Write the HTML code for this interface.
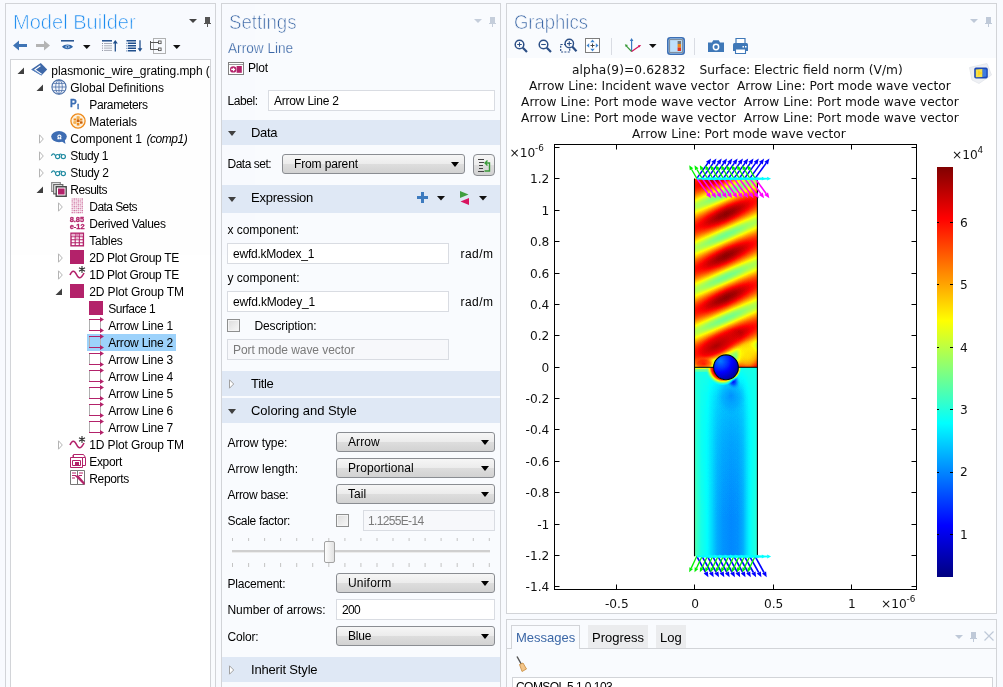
<!DOCTYPE html><html><head><meta charset="utf-8"><title>COMSOL</title><style>
*{box-sizing:border-box;margin:0;padding:0}
html,body{width:1003px;height:687px;overflow:hidden}
body{background:#f8fafe;font-family:"Liberation Sans",sans-serif;font-size:12px;color:#000;position:relative}
.abs{position:absolute}
.panel{position:absolute;border:1px solid #d2d4d8;background:#f9fbfe}
.t{position:absolute;white-space:pre;line-height:16px;height:16px}
.title{position:absolute;white-space:pre;font-size:21px;line-height:24px;transform-origin:0 0;color:#3b67a6;-webkit-text-stroke:.7px #f9fbfe}
.hdr{position:absolute;left:222px;width:278px;background:#dfe8f5}
.hdr span{position:absolute;left:29px;font-size:13px;white-space:pre}
.inp{position:absolute;border:1px solid #d9dce2;background:#fff;padding-left:4px;white-space:pre}
.inp.dis{background:#f7f8fb;color:#7a7a7a}
.combo{position:absolute;border:1px solid #8a8d92;border-radius:3px;background:linear-gradient(#f6f6f6 0%,#ececec 48%,#dddddd 52%,#d2d2d2 100%);white-space:pre}
.combo i{position:absolute;right:5px;top:7px;width:0;height:0;border-left:4px solid transparent;border-right:4px solid transparent;border-top:5px solid #000}
.cb{position:absolute;width:13px;height:13px;border:1px solid #8e8f8f;background:linear-gradient(135deg,#dcdcdc,#f8f8f8);box-shadow:inset 0 0 0 1px #f4f4f4}
.dj{font-family:"DejaVu Sans",sans-serif;font-size:12.2px;color:#111}
svg{position:absolute;overflow:visible}
</style></head><body><div id="root" style="position:absolute;left:0;top:0;width:1003px;height:687px;will-change:transform;opacity:.9999">
<div class="panel" style="left:5px;top:3px;width:211px;height:700px"></div>
<div class="panel" style="left:221px;top:3px;width:280px;height:700px"></div>
<div class="panel" style="left:506px;top:3px;width:491px;height:611px"></div>
<div class="panel" style="left:506px;top:619px;width:491px;height:80px"></div>
<div class="title" style="left:13px;top:10px;color:#1e8cf0;transform:scaleX(.955)">Model Builder</div>
<div class="abs" style="left:10px;top:59px;width:201px;height:640px;border:1px solid #d2d4d8;background:#fff"></div>
<svg style="left:31px;top:62px" width="16" height="16" viewBox="0 0 16 16"><path d="M9.8 1L16.2 7.6L10.4 13.6L0.2 7.6Z" fill="#3e68a8"/><path d="M0.2 7.6L10.4 13.6L10.6 12L4 7.6Z" fill="#5b84c0"/><path d="M9.4 3.8L4 7.6L10.6 12.1" stroke="#fff" stroke-width="1.1" fill="none"/></svg>
<div class="t" style="left:51.3px;top:63px;line-height:17px;height:17px;letter-spacing:-0.056px;">plasmonic_wire_grating.mph (</div>
<svg style="left:17px;top:67px" width="8" height="8" viewBox="0 0 8 8"><path d="M7 0.5V7H0.5Z" fill="#404040"/></svg>
<svg style="left:51px;top:79px" width="16" height="16" viewBox="0 0 16 16"><circle cx="8" cy="8" r="7.1" fill="#f3f6fc" stroke="#4a6fa8" stroke-width="1.1"/><ellipse cx="8" cy="8" rx="3.3" ry="7" fill="none" stroke="#4a6fa8" stroke-width="0.8"/><path d="M8 1V15M1 8H15M2.2 4.4H13.8M2.2 11.6H13.8" stroke="#4a6fa8" stroke-width="0.8"/></svg>
<div class="t" style="left:70.3px;top:80px;line-height:17px;height:17px;letter-spacing:-0.025px;">Global Definitions</div>
<svg style="left:36px;top:84px" width="8" height="8" viewBox="0 0 8 8"><path d="M7 0.5V7H0.5Z" fill="#404040"/></svg>
<svg style="left:70px;top:96px" width="16" height="16" viewBox="0 0 16 16"><text x="0" y="10.8" font-size="10" fill="#3a6db5" stroke="#3a6db5" stroke-width=".3" style="font-family:Liberation Sans,sans-serif;font-weight:bold">P</text><text x="7" y="12.8" font-size="8" fill="#3a6db5" stroke="#3a6db5" stroke-width=".3" style="font-family:Liberation Sans,sans-serif;font-weight:bold">i</text></svg>
<div class="t" style="left:89.3px;top:97px;line-height:17px;height:17px;letter-spacing:-0.372px;">Parameters</div>
<svg style="left:70px;top:113px" width="16" height="16" viewBox="0 0 16 16"><circle cx="8" cy="8" r="7.1" fill="#fdf0dc" stroke="#ee8a1a" stroke-width="1.3"/><path d="M3.6 5.4H6.2V7.6H3.6ZM6.8 3.6H9.4V5.8H6.8ZM10 5.4H12.4V7.6H10ZM6.8 6.6H9.4V9H6.8ZM3.6 8.4H6.2V10.6H3.6ZM10 8.4H12.4V10.6H10ZM6.8 9.8H9.4V12.4H6.8Z" fill="#ee8a1a"/><path d="M6.8 6.6H9.4V9H6.8ZM10 8.4H12.4V10.6H10Z" fill="#c8600e"/><path d="M6.8 3.6H9.4V5.8H6.8ZM3.6 8.4H6.2V10.6H3.6Z" fill="#f6b04a"/></svg>
<div class="t" style="left:89.3px;top:114px;line-height:17px;height:17px;letter-spacing:-0.120px;">Materials</div>
<svg style="left:51px;top:130px" width="16" height="16" viewBox="0 0 16 16"><ellipse cx="8" cy="6.6" rx="7.8" ry="5.6" fill="#3e6db3"/><path d="M9.5 10.5L14.5 14L13.5 8.5Z" fill="#3e6db3"/><path d="M6.4 8.6H7.7V7.8C6.5 7.2 6.4 5.2 8.4 5C10.4 5.2 10.3 7.2 9.1 7.8V8.6H10.4" stroke="#fff" stroke-width="1.1" fill="none"/></svg>
<div class="t" style="left:70.3px;top:131px;line-height:17px;height:17px;"><span style="letter-spacing:-0.040px;">Component 1</span><i style="margin-left:4.5px;letter-spacing:-0.458px;">(comp1)</i></div>
<svg style="left:39px;top:134px" width="6" height="10" viewBox="0 0 6 10"><path d="M0.5 0.8L4.3 5L0.5 9.2Z" fill="#fff" stroke="#b4b4b4"/></svg>
<svg style="left:51px;top:147px" width="16" height="16" viewBox="0 0 16 16"><path d="M0.3 8.8C1.6 6.2 3.2 6.4 4.4 8.6" stroke="#1f8aa0" stroke-width="1.2" fill="none"/><circle cx="6.6" cy="9.6" r="2.1" stroke="#1f8aa0" stroke-width="1.2" fill="none"/><circle cx="12.3" cy="9.6" r="2.1" stroke="#1f8aa0" stroke-width="1.2" fill="none"/><path d="M8.2 8C9 6.6 10 6.6 10.8 8" stroke="#1f8aa0" stroke-width="1.1" fill="none"/></svg>
<div class="t" style="left:70.3px;top:148px;line-height:17px;height:17px;letter-spacing:-0.413px;">Study 1</div>
<svg style="left:39px;top:151px" width="6" height="10" viewBox="0 0 6 10"><path d="M0.5 0.8L4.3 5L0.5 9.2Z" fill="#fff" stroke="#b4b4b4"/></svg>
<svg style="left:51px;top:164px" width="16" height="16" viewBox="0 0 16 16"><path d="M0.3 8.8C1.6 6.2 3.2 6.4 4.4 8.6" stroke="#1f8aa0" stroke-width="1.2" fill="none"/><circle cx="6.6" cy="9.6" r="2.1" stroke="#1f8aa0" stroke-width="1.2" fill="none"/><circle cx="12.3" cy="9.6" r="2.1" stroke="#1f8aa0" stroke-width="1.2" fill="none"/><path d="M8.2 8C9 6.6 10 6.6 10.8 8" stroke="#1f8aa0" stroke-width="1.1" fill="none"/></svg>
<div class="t" style="left:70.3px;top:165px;line-height:17px;height:17px;letter-spacing:-0.356px;">Study 2</div>
<svg style="left:39px;top:168px" width="6" height="10" viewBox="0 0 6 10"><path d="M0.5 0.8L4.3 5L0.5 9.2Z" fill="#fff" stroke="#b4b4b4"/></svg>
<svg style="left:51px;top:181px" width="16" height="16" viewBox="0 0 16 16"><path d="M0.7 1.7H9.3V10.3H0.7Z" fill="#fff" stroke="#8a8a8a" stroke-width="1.2"/><path d="M2.7 3.7H11.8V12.8H2.7Z" fill="#fff" stroke="#6a6a6a" stroke-width="1.2"/><path d="M5.2 5.8H15.2V15.2H5.2Z" fill="#fff" stroke="#4a4a4a" stroke-width="1.4"/><rect x="7" y="7.5" width="6.6" height="6" fill="#b3226a"/></svg>
<div class="t" style="left:70.3px;top:182px;line-height:17px;height:17px;letter-spacing:-0.488px;">Results</div>
<svg style="left:36px;top:186px" width="8" height="8" viewBox="0 0 8 8"><path d="M7 0.5V7H0.5Z" fill="#404040"/></svg>
<svg style="left:70px;top:198px" width="16" height="16" viewBox="0 0 16 16"><rect x="1.6" y="0.40" width="1.2" height="1.2" fill="#b3226a" opacity="0.50"/><rect x="1.6" y="2.35" width="1.2" height="1.2" fill="#b3226a" opacity="0.74"/><rect x="1.6" y="4.30" width="1.2" height="1.2" fill="#b3226a" opacity="0.50"/><rect x="1.6" y="6.25" width="1.2" height="1.2" fill="#b3226a" opacity="0.74"/><rect x="1.6" y="8.20" width="1.2" height="1.2" fill="#b3226a" opacity="0.50"/><rect x="1.6" y="10.15" width="1.2" height="1.2" fill="#b3226a" opacity="0.74"/><rect x="1.6" y="12.10" width="1.2" height="1.2" fill="#b3226a" opacity="0.50"/><rect x="1.6" y="14.05" width="1.2" height="1.2" fill="#b3226a" opacity="0.74"/><rect x="3.6" y="0.40" width="1.2" height="1.2" fill="#b3226a" opacity="0.86"/><rect x="3.6" y="2.35" width="1.2" height="1.2" fill="#b3226a" opacity="0.62"/><rect x="3.6" y="4.30" width="1.2" height="1.2" fill="#b3226a" opacity="0.86"/><rect x="3.6" y="6.25" width="1.2" height="1.2" fill="#b3226a" opacity="0.62"/><rect x="3.6" y="8.20" width="1.2" height="1.2" fill="#b3226a" opacity="0.86"/><rect x="3.6" y="10.15" width="1.2" height="1.2" fill="#b3226a" opacity="0.62"/><rect x="3.6" y="12.10" width="1.2" height="1.2" fill="#b3226a" opacity="0.86"/><rect x="3.6" y="14.05" width="1.2" height="1.2" fill="#b3226a" opacity="0.62"/><rect x="5.6" y="0.40" width="1.2" height="1.2" fill="#b3226a" opacity="0.74"/><rect x="5.6" y="2.35" width="1.2" height="1.2" fill="#b3226a" opacity="0.50"/><rect x="5.6" y="4.30" width="1.2" height="1.2" fill="#b3226a" opacity="0.74"/><rect x="5.6" y="6.25" width="1.2" height="1.2" fill="#b3226a" opacity="0.50"/><rect x="5.6" y="8.20" width="1.2" height="1.2" fill="#b3226a" opacity="0.74"/><rect x="5.6" y="10.15" width="1.2" height="1.2" fill="#b3226a" opacity="0.50"/><rect x="5.6" y="12.10" width="1.2" height="1.2" fill="#b3226a" opacity="0.74"/><rect x="5.6" y="14.05" width="1.2" height="1.2" fill="#b3226a" opacity="0.50"/><rect x="7.6" y="0.40" width="1.2" height="1.2" fill="#b3226a" opacity="0.62"/><rect x="7.6" y="2.35" width="1.2" height="1.2" fill="#b3226a" opacity="0.86"/><rect x="7.6" y="4.30" width="1.2" height="1.2" fill="#b3226a" opacity="0.62"/><rect x="7.6" y="6.25" width="1.2" height="1.2" fill="#b3226a" opacity="0.86"/><rect x="7.6" y="8.20" width="1.2" height="1.2" fill="#b3226a" opacity="0.62"/><rect x="7.6" y="10.15" width="1.2" height="1.2" fill="#b3226a" opacity="0.86"/><rect x="7.6" y="12.10" width="1.2" height="1.2" fill="#b3226a" opacity="0.62"/><rect x="7.6" y="14.05" width="1.2" height="1.2" fill="#b3226a" opacity="0.86"/><rect x="9.6" y="0.40" width="1.2" height="1.2" fill="#b3226a" opacity="0.50"/><rect x="9.6" y="2.35" width="1.2" height="1.2" fill="#b3226a" opacity="0.74"/><rect x="9.6" y="4.30" width="1.2" height="1.2" fill="#b3226a" opacity="0.50"/><rect x="9.6" y="6.25" width="1.2" height="1.2" fill="#b3226a" opacity="0.74"/><rect x="9.6" y="8.20" width="1.2" height="1.2" fill="#b3226a" opacity="0.50"/><rect x="9.6" y="10.15" width="1.2" height="1.2" fill="#b3226a" opacity="0.74"/><rect x="9.6" y="12.10" width="1.2" height="1.2" fill="#b3226a" opacity="0.50"/><rect x="9.6" y="14.05" width="1.2" height="1.2" fill="#b3226a" opacity="0.74"/><rect x="11.6" y="0.40" width="1.2" height="1.2" fill="#b3226a" opacity="0.86"/><rect x="11.6" y="2.35" width="1.2" height="1.2" fill="#b3226a" opacity="0.62"/><rect x="11.6" y="4.30" width="1.2" height="1.2" fill="#b3226a" opacity="0.86"/><rect x="11.6" y="6.25" width="1.2" height="1.2" fill="#b3226a" opacity="0.62"/><rect x="11.6" y="8.20" width="1.2" height="1.2" fill="#b3226a" opacity="0.86"/><rect x="11.6" y="10.15" width="1.2" height="1.2" fill="#b3226a" opacity="0.62"/><rect x="11.6" y="12.10" width="1.2" height="1.2" fill="#b3226a" opacity="0.86"/><rect x="11.6" y="14.05" width="1.2" height="1.2" fill="#b3226a" opacity="0.62"/></svg>
<div class="t" style="left:89.3px;top:199px;line-height:17px;height:17px;letter-spacing:-0.566px;">Data Sets</div>
<svg style="left:58px;top:202px" width="6" height="10" viewBox="0 0 6 10"><path d="M0.5 0.8L4.3 5L0.5 9.2Z" fill="#fff" stroke="#b4b4b4"/></svg>
<svg style="left:70px;top:215px" width="16" height="16" viewBox="0 0 16 16"><g font-size="7.4" fill="#b3226a" stroke="#b3226a" stroke-width=".3" style="font-family:Liberation Sans,sans-serif;font-weight:bold"><text x="-0.3" y="7">8.85</text><text x="-0.3" y="14">e-12</text></g></svg>
<div class="t" style="left:89.3px;top:216px;line-height:17px;height:17px;letter-spacing:-0.291px;">Derived Values</div>
<svg style="left:70px;top:232px" width="16" height="16" viewBox="0 0 16 16"><rect x="1" y="1.2" width="12.4" height="12.6" fill="#fff" stroke="#b3226a" stroke-width="1.4"/><path d="M1 4.8H13.4M1 7.8H13.4M1 10.8H13.4M5.2 1.5V13.8M9.3 1.5V13.8" stroke="#b3226a" stroke-width="1.1"/><rect x="1.7" y="1.9" width="3" height="2.3" fill="#e9b3cf"/><rect x="5.8" y="1.9" width="3" height="2.3" fill="#d984b0"/><rect x="9.9" y="1.9" width="2.8" height="2.3" fill="#e9b3cf"/><rect x="5.8" y="5.4" width="3" height="1.9" fill="#e9b3cf"/></svg>
<div class="t" style="left:89.3px;top:233px;line-height:17px;height:17px;letter-spacing:-0.231px;">Tables</div>
<svg style="left:70px;top:249px" width="16" height="16" viewBox="0 0 16 16"><rect x="0" y="1" width="14" height="14" fill="#b3226a"/></svg>
<div class="t" style="left:89.3px;top:250px;line-height:17px;height:17px;letter-spacing:-0.305px;">2D Plot Group TE</div>
<svg style="left:58px;top:253px" width="6" height="10" viewBox="0 0 6 10"><path d="M0.5 0.8L4.3 5L0.5 9.2Z" fill="#fff" stroke="#b4b4b4"/></svg>
<svg style="left:70px;top:266px" width="16" height="16" viewBox="0 0 16 16"><path d="M0 9C2 4 4.5 4 6.5 8.5S11 13 14 7" stroke="#b3226a" stroke-width="1.6" fill="none"/><path d="M12 0V7M9 1.7L15 5.3M15 1.7L9 5.3" stroke="#333" stroke-width="1.1"/></svg>
<div class="t" style="left:89.3px;top:267px;line-height:17px;height:17px;letter-spacing:-0.305px;">1D Plot Group TE</div>
<svg style="left:58px;top:270px" width="6" height="10" viewBox="0 0 6 10"><path d="M0.5 0.8L4.3 5L0.5 9.2Z" fill="#fff" stroke="#b4b4b4"/></svg>
<svg style="left:70px;top:283px" width="16" height="16" viewBox="0 0 16 16"><rect x="0" y="1" width="14" height="14" fill="#b3226a"/></svg>
<div class="t" style="left:89.3px;top:284px;line-height:17px;height:17px;letter-spacing:-0.117px;">2D Plot Group TM</div>
<svg style="left:55px;top:288px" width="8" height="8" viewBox="0 0 8 8"><path d="M7 0.5V7H0.5Z" fill="#404040"/></svg>
<svg style="left:89px;top:300px" width="16" height="16" viewBox="0 0 16 16"><rect x="0" y="1" width="14" height="14" fill="#b3226a"/></svg>
<div class="t" style="left:108.3px;top:301px;line-height:17px;height:17px;letter-spacing:-0.496px;">Surface 1</div>
<svg style="left:89px;top:317px" width="16" height="16" viewBox="0 0 16 16"><path d="M0.5 3V14M11.5 3V14" stroke="#b0b0b0" fill="none"/><path d="M0 2.5H13M0 13.5H13" stroke="#b3226a" stroke-width="1.2" fill="none"/><path d="M11 0L15 2.5L11 5ZM11 11L15 13.5L11 16Z" fill="#b3226a"/></svg>
<div class="t" style="left:108.3px;top:318px;line-height:17px;height:17px;letter-spacing:-0.222px;">Arrow Line 1</div>
<div class="abs" style="left:87px;top:334px;width:89px;height:17px;background:#9dd2fb"></div>
<svg style="left:89px;top:334px" width="16" height="16" viewBox="0 0 16 16"><path d="M0.5 3V14M11.5 3V14" stroke="#b0b0b0" fill="none"/><path d="M0 2.5H13M0 13.5H13" stroke="#b3226a" stroke-width="1.2" fill="none"/><path d="M11 0L15 2.5L11 5ZM11 11L15 13.5L11 16Z" fill="#b3226a"/></svg>
<div class="t" style="left:108.3px;top:335px;line-height:17px;height:17px;letter-spacing:-0.222px;">Arrow Line 2</div>
<svg style="left:89px;top:351px" width="16" height="16" viewBox="0 0 16 16"><path d="M0.5 3V14M11.5 3V14" stroke="#b0b0b0" fill="none"/><path d="M0 2.5H13M0 13.5H13" stroke="#b3226a" stroke-width="1.2" fill="none"/><path d="M11 0L15 2.5L11 5ZM11 11L15 13.5L11 16Z" fill="#b3226a"/></svg>
<div class="t" style="left:108.3px;top:352px;line-height:17px;height:17px;letter-spacing:-0.222px;">Arrow Line 3</div>
<svg style="left:89px;top:368px" width="16" height="16" viewBox="0 0 16 16"><path d="M0.5 3V14M11.5 3V14" stroke="#b0b0b0" fill="none"/><path d="M0 2.5H13M0 13.5H13" stroke="#b3226a" stroke-width="1.2" fill="none"/><path d="M11 0L15 2.5L11 5ZM11 11L15 13.5L11 16Z" fill="#b3226a"/></svg>
<div class="t" style="left:108.3px;top:369px;line-height:17px;height:17px;letter-spacing:-0.222px;">Arrow Line 4</div>
<svg style="left:89px;top:385px" width="16" height="16" viewBox="0 0 16 16"><path d="M0.5 3V14M11.5 3V14" stroke="#b0b0b0" fill="none"/><path d="M0 2.5H13M0 13.5H13" stroke="#b3226a" stroke-width="1.2" fill="none"/><path d="M11 0L15 2.5L11 5ZM11 11L15 13.5L11 16Z" fill="#b3226a"/></svg>
<div class="t" style="left:108.3px;top:386px;line-height:17px;height:17px;letter-spacing:-0.222px;">Arrow Line 5</div>
<svg style="left:89px;top:402px" width="16" height="16" viewBox="0 0 16 16"><path d="M0.5 3V14M11.5 3V14" stroke="#b0b0b0" fill="none"/><path d="M0 2.5H13M0 13.5H13" stroke="#b3226a" stroke-width="1.2" fill="none"/><path d="M11 0L15 2.5L11 5ZM11 11L15 13.5L11 16Z" fill="#b3226a"/></svg>
<div class="t" style="left:108.3px;top:403px;line-height:17px;height:17px;letter-spacing:-0.222px;">Arrow Line 6</div>
<svg style="left:89px;top:419px" width="16" height="16" viewBox="0 0 16 16"><path d="M0.5 3V14M11.5 3V14" stroke="#b0b0b0" fill="none"/><path d="M0 2.5H13M0 13.5H13" stroke="#b3226a" stroke-width="1.2" fill="none"/><path d="M11 0L15 2.5L11 5ZM11 11L15 13.5L11 16Z" fill="#b3226a"/></svg>
<div class="t" style="left:108.3px;top:420px;line-height:17px;height:17px;letter-spacing:-0.222px;">Arrow Line 7</div>
<svg style="left:70px;top:436px" width="16" height="16" viewBox="0 0 16 16"><path d="M0 9C2 4 4.5 4 6.5 8.5S11 13 14 7" stroke="#b3226a" stroke-width="1.6" fill="none"/><path d="M12 0V7M9 1.7L15 5.3M15 1.7L9 5.3" stroke="#333" stroke-width="1.1"/></svg>
<div class="t" style="left:89.3px;top:437px;line-height:17px;height:17px;letter-spacing:-0.117px;">1D Plot Group TM</div>
<svg style="left:58px;top:440px" width="6" height="10" viewBox="0 0 6 10"><path d="M0.5 0.8L4.3 5L0.5 9.2Z" fill="#fff" stroke="#b4b4b4"/></svg>
<svg style="left:70px;top:453px" width="16" height="16" viewBox="0 0 16 16"><path d="M3.5 1.5H13.5L15.5 4.5V12.5H5.5L3.5 9.5Z" fill="#fff" stroke="#b3226a" stroke-width="1"/><path d="M0.5 4.5H12.5V14.5H0.5Z" fill="#fff" stroke="#b3226a" stroke-width="1"/><path d="M3 4.5V2M12.5 4.5L15 4.5M2.5 7.5H10.5V12.5H2.5Z" fill="none" stroke="#b3226a" stroke-width="1"/><rect x="5" y="9" width="4" height="3" fill="#b3226a"/></svg>
<div class="t" style="left:89.3px;top:454px;line-height:17px;height:17px;letter-spacing:-0.347px;">Export</div>
<svg style="left:70px;top:470px" width="16" height="16" viewBox="0 0 16 16"><path d="M0.5 0.5H7.5V14.5H0.5ZM7.5 0.5H14.5V14.5H7.5Z" fill="#fff" stroke="#777"/><path d="M2 3H6M2 5.5H6M2 8H5M9 3H13M9 5.5H12" stroke="#b3226a" stroke-width="1"/><path d="M5 6L14 15L15 13L8 5Z" fill="#b3226a"/></svg>
<div class="t" style="left:89.3px;top:471px;line-height:17px;height:17px;letter-spacing:-0.345px;">Reports</div>
<svg style="left:189px;top:19px" width="8" height="4" viewBox="0 0 8 4"><path d="M0 0H8L4.0 4Z" fill="#444"/></svg>
<svg style="left:204px;top:17px" width="7" height="10" viewBox="0 0 7 10"><path d="M1 0H6V6H7V7H4V10H3V7H0V6H1Z" fill="#555"/></svg>
<svg style="left:13px;top:40px" width="14" height="11" viewBox="0 0 14 11"><path d="M0 5.5L6 0.5V4H14V7H6V10.5Z" fill="#3f74b5"/></svg>
<svg style="left:36px;top:40px" width="14" height="11" viewBox="0 0 14 11"><path d="M14 5.5L8 0.5V4H0V7H8V10.5Z" fill="#b4b4b4"/></svg>
<svg style="left:61px;top:40px" width="14" height="11" viewBox="0 0 14 11"><path d="M0 0.8H13" stroke="#1f4e8c" stroke-width="1.5"/><path d="M1 6.8C3.5 3.6 9.5 3.6 12 6.8C9.5 10 3.5 10 1 6.8Z" fill="#2f65a8"/><ellipse cx="6.5" cy="6.8" rx="2.2" ry="1.5" fill="#9fc3ea"/><circle cx="6.5" cy="6.8" r=".9" fill="#1f4e8c"/></svg>
<svg style="left:83px;top:44.5px" width="7.5" height="4" viewBox="0 0 7.5 4"><path d="M0 0H7.5L3.75 4Z" fill="#111"/></svg>
<svg style="left:102px;top:40px" width="16" height="12" viewBox="0 0 16 12"><path d="M0 0.8H10" stroke="#1f4e8c" stroke-width="1.5"/><path d="M2 3.5H10M2 5.8H10M2 8.1H10M2 10.4H10" stroke="#a9adb8" stroke-width="1"/><path d="M0 3.5H1M0 5.8H1M0 8.1H1M0 10.4H1" stroke="#8a8fa0" stroke-width="1"/><path d="M13.3 11.5V2" stroke="#1f4e8c" stroke-width="1.3" fill="none"/><path d="M13.3 0L15.8 3.6H10.8Z" fill="#1f4e8c"/></svg>
<svg style="left:126px;top:40px" width="16" height="12" viewBox="0 0 16 12"><path d="M0.5 0.8H10M2 3.3H10M2 5.8H10M2 8.3H10M2 10.8H10" stroke="#1f4e8c" stroke-width="1.5"/><path d="M0.5 3.3H1.3M0.5 5.8H1.3M0.5 8.3H1.3M0.5 10.8H1.3" stroke="#1f4e8c" stroke-width="1.2"/><path d="M14 0.3V9.5" stroke="#1f4e8c" stroke-width="1.3" fill="none"/><path d="M14 11.8L16.4 8.2H11.6Z" fill="#1f4e8c"/></svg>
<svg style="left:149px;top:38px" width="18" height="16" viewBox="0 0 18 16"><rect x="4.5" y="0.5" width="12" height="15" fill="none" stroke="#666" stroke-dasharray="1 1"/><path d="M1.5 3V11.5H9.5M1.5 4.5H9.5" stroke="#555" fill="none"/><rect x="9.5" y="3" width="2.6" height="2.6" fill="#fff" stroke="#555" stroke-width=".9"/><rect x="9.5" y="10" width="2.6" height="2.6" fill="#fff" stroke="#555" stroke-width=".9"/></svg>
<svg style="left:172.5px;top:44.5px" width="7.5" height="4" viewBox="0 0 7.5 4"><path d="M0 0H7.5L3.75 4Z" fill="#111"/></svg>
<div class="title" style="left:229px;top:10px;transform:scaleX(.89)">Settings</div>
<svg style="left:474px;top:19px" width="8" height="4" viewBox="0 0 8 4"><path d="M0 0H8L4.0 4Z" fill="#c5cedb"/></svg>
<svg style="left:489px;top:17px" width="7" height="10" viewBox="0 0 7 10"><path d="M1 0H6V6H7V7H4V10H3V7H0V6H1Z" fill="#c5cedb"/></svg>
<div class="title" style="left:228px;top:39px;font-size:14.67px;line-height:18px;transform:scaleX(.93);-webkit-text-stroke:.25px #f9fbfe">Arrow Line</div>
<svg style="left:228px;top:62px" width="16" height="13" viewBox="0 0 16 13"><rect x="0.5" y="0.5" width="15" height="12" fill="#fff" stroke="#808080"/><path d="M1 2.5H15" stroke="#9a9a9a"/><rect x="8.6" y="4" width="5.2" height="6.8" fill="#b3226a"/><circle cx="5.2" cy="7.4" r="3.2" fill="#b3226a"/><path d="M3.2 7.4H5.6" stroke="#fff" stroke-width="1.5"/><path d="M5 5.4L7.4 7.4L5 9.4Z" fill="#fff"/></svg>
<div class="t" style="left:248px;top:60px;letter-spacing:-0.169px;">Plot</div>
<div class="t" style="left:227.5px;top:93px;letter-spacing:-0.415px;">Label:</div>
<div class="inp" style="left:268px;top:90px;width:227px;height:21px;line-height:21px;padding-left:5px"><span style="letter-spacing:-0.213px;">Arrow Line 2</span></div>
<div class="hdr" style="top:120px;height:25px"><span style="top:4.5px;line-height:16px;letter-spacing:-0.340px;">Data</span></div>
<svg style="left:228px;top:130.5px" width="8" height="5" viewBox="0 0 8 5"><path d="M0 0H8L4 5Z" fill="#404040"/></svg>
<div class="t" style="left:227.5px;top:156px;letter-spacing:-0.491px;">Data set:</div>
<div class="combo" style="left:282px;top:154px;width:183px;height:20px;line-height:19px;padding-left:11px;letter-spacing:-0.132px;">From parent<i></i></div>
<div class="combo" style="left:473px;top:154px;width:22px;height:22px;border-radius:4px"></div>
<svg style="left:477px;top:158px" width="14" height="14" viewBox="0 0 14 14"><path d="M1 1.5H7M2 4.5H7M2 7.5H6M2 10.5H6M1 13.5H7" stroke="#444" stroke-width="1"/><path d="M7.5 13H12.5V5H8.5M10.5 2.5L8 5L10.5 7.5" stroke="#3a9a3a" stroke-width="1.4" fill="none"/></svg>
<div class="hdr" style="top:185px;height:28px"><span style="top:5px;line-height:16px;letter-spacing:-0.221px;">Expression</span></div>
<svg style="left:228px;top:197.0px" width="8" height="5" viewBox="0 0 8 5"><path d="M0 0H8L4 5Z" fill="#404040"/></svg>
<svg style="left:417px;top:192px" width="11" height="11" viewBox="0 0 11 11"><path d="M4 0H7V4H11V7H7V11H4V7H0V4H4Z" fill="#3d7bbf"/></svg>
<svg style="left:436.5px;top:196px" width="8" height="4.5" viewBox="0 0 8 4.5"><path d="M0 0H8L4.0 4.5Z" fill="#111"/></svg>
<svg style="left:460px;top:190.5px" width="9" height="14" viewBox="0 0 9 14"><path d="M0 0L8.5 3.5L0 7Z" fill="#3f9f3f"/><path d="M9 7L0.5 10.5L9 14Z" fill="#d8145f"/></svg>
<svg style="left:478.5px;top:196px" width="8" height="4.5" viewBox="0 0 8 4.5"><path d="M0 0H8L4.0 4.5Z" fill="#111"/></svg>
<div class="t" style="left:227.5px;top:222px;letter-spacing:-0.036px;">x component:</div>
<div class="inp" style="left:227px;top:243px;width:222px;height:21px;line-height:21px;padding-left:5px"><span style="letter-spacing:-0.226px;">ewfd.kModex_1</span></div>
<div class="t" style="left:460.5px;top:246px;letter-spacing:0.446px;">rad/m</div>
<div class="t" style="left:227.5px;top:270px;letter-spacing:-0.003px;">y component:</div>
<div class="inp" style="left:227px;top:291px;width:222px;height:21px;line-height:21px;padding-left:5px"><span style="letter-spacing:-0.157px;">ewfd.kModey_1</span></div>
<div class="t" style="left:460.5px;top:294px;letter-spacing:0.446px;">rad/m</div>
<div class="cb" style="left:227px;top:319px"></div>
<div class="t" style="left:254.5px;top:318px;letter-spacing:-0.121px;">Description:</div>
<div class="inp dis" style="left:227px;top:339px;width:222px;height:21px;line-height:21px;padding-left:5px"><span style="letter-spacing:-0.053px;">Port mode wave vector</span></div>
<div class="hdr" style="top:371px;height:25px"><span style="top:4.5px;line-height:16px;letter-spacing:-0.315px;">Title</span></div>
<svg style="left:229px;top:378.5px" width="6" height="10" viewBox="0 0 6 10"><path d="M0.5 0.8L4.7 5L0.5 9.2Z" fill="#fff" stroke="#a0a0a0"/></svg>
<div class="hdr" style="top:398px;height:25px"><span style="top:4.5px;line-height:16px;letter-spacing:-0.029px;">Coloring and Style</span></div>
<svg style="left:228px;top:408.5px" width="8" height="5" viewBox="0 0 8 5"><path d="M0 0H8L4 5Z" fill="#404040"/></svg>
<div class="t" style="left:227.5px;top:435px;letter-spacing:-0.080px;">Arrow type:</div>
<div class="combo" style="left:336px;top:432px;width:159px;height:20px;line-height:19px;padding-left:11px;letter-spacing:0.093px;">Arrow<i></i></div>
<div class="t" style="left:227.5px;top:461px;letter-spacing:-0.015px;">Arrow length:</div>
<div class="combo" style="left:336px;top:458px;width:159px;height:20px;line-height:19px;padding-left:11px;letter-spacing:0.083px;">Proportional<i></i></div>
<div class="t" style="left:227.5px;top:487px;letter-spacing:-0.293px;">Arrow base:</div>
<div class="combo" style="left:336px;top:484px;width:159px;height:20px;line-height:19px;padding-left:11px;letter-spacing:0.074px;">Tail<i></i></div>
<div class="t" style="left:227.5px;top:513px;letter-spacing:-0.315px;">Scale factor:</div>
<div class="cb" style="left:336px;top:514px"></div>
<div class="inp dis" style="left:363px;top:510px;width:132px;height:21px;line-height:21px;padding-left:4px"><span style="letter-spacing:-0.655px;">1.1255E-14</span></div>
<svg style="left:0;top:0" width="1003" height="687"><rect x="232.0" y="538" width="1" height="3" fill="#c4c4c4"/><rect x="232.0" y="563" width="1" height="4" fill="#c4c4c4"/><rect x="248.1" y="538" width="1" height="3" fill="#c4c4c4"/><rect x="248.1" y="563" width="1" height="4" fill="#c4c4c4"/><rect x="264.1" y="538" width="1" height="3" fill="#c4c4c4"/><rect x="264.1" y="563" width="1" height="4" fill="#c4c4c4"/><rect x="280.1" y="538" width="1" height="3" fill="#c4c4c4"/><rect x="280.1" y="563" width="1" height="4" fill="#c4c4c4"/><rect x="296.2" y="538" width="1" height="3" fill="#c4c4c4"/><rect x="296.2" y="563" width="1" height="4" fill="#c4c4c4"/><rect x="312.2" y="538" width="1" height="3" fill="#c4c4c4"/><rect x="312.2" y="563" width="1" height="4" fill="#c4c4c4"/><rect x="328.3" y="538" width="1" height="3" fill="#c4c4c4"/><rect x="328.3" y="563" width="1" height="4" fill="#c4c4c4"/><rect x="344.4" y="538" width="1" height="3" fill="#c4c4c4"/><rect x="344.4" y="563" width="1" height="4" fill="#c4c4c4"/><rect x="360.4" y="538" width="1" height="3" fill="#c4c4c4"/><rect x="360.4" y="563" width="1" height="4" fill="#c4c4c4"/><rect x="376.5" y="538" width="1" height="3" fill="#c4c4c4"/><rect x="376.5" y="563" width="1" height="4" fill="#c4c4c4"/><rect x="392.5" y="538" width="1" height="3" fill="#c4c4c4"/><rect x="392.5" y="563" width="1" height="4" fill="#c4c4c4"/><rect x="408.6" y="538" width="1" height="3" fill="#c4c4c4"/><rect x="408.6" y="563" width="1" height="4" fill="#c4c4c4"/><rect x="424.6" y="538" width="1" height="3" fill="#c4c4c4"/><rect x="424.6" y="563" width="1" height="4" fill="#c4c4c4"/><rect x="440.6" y="538" width="1" height="3" fill="#c4c4c4"/><rect x="440.6" y="563" width="1" height="4" fill="#c4c4c4"/><rect x="456.7" y="538" width="1" height="3" fill="#c4c4c4"/><rect x="456.7" y="563" width="1" height="4" fill="#c4c4c4"/><rect x="472.8" y="538" width="1" height="3" fill="#c4c4c4"/><rect x="472.8" y="563" width="1" height="4" fill="#c4c4c4"/><rect x="488.8" y="538" width="1" height="3" fill="#c4c4c4"/><rect x="488.8" y="563" width="1" height="4" fill="#c4c4c4"/><rect x="232" y="550" width="258" height="2" fill="#cfcfcf"/><rect x="232" y="552" width="258" height="1" fill="#ececec"/></svg>
<div class="abs" style="left:324px;top:541px;width:11px;height:22px;border:1px solid #a3a3a3;border-radius:2px;background:linear-gradient(90deg,#fdfdfd,#e2e2e2)"></div>
<div class="t" style="left:227.5px;top:576px;letter-spacing:-0.223px;">Placement:</div>
<div class="combo" style="left:336px;top:573px;width:159px;height:20px;line-height:19px;padding-left:11px;letter-spacing:0.199px;">Uniform<i></i></div>
<div class="t" style="left:227.5px;top:602px;letter-spacing:-0.046px;">Number of arrows:</div>
<div class="inp" style="left:336px;top:599px;width:159px;height:21px;line-height:21px;padding-left:5px"><span style="letter-spacing:-0.673px;">200</span></div>
<div class="t" style="left:227.5px;top:629px;letter-spacing:-0.185px;">Color:</div>
<div class="combo" style="left:336px;top:626px;width:159px;height:20px;line-height:19px;padding-left:11px;letter-spacing:-0.179px;">Blue<i></i></div>
<div class="hdr" style="top:657px;height:25px"><span style="top:4.5px;line-height:16px;letter-spacing:-0.172px;">Inherit Style</span></div>
<svg style="left:229px;top:664.5px" width="6" height="10" viewBox="0 0 6 10"><path d="M0.5 0.8L4.7 5L0.5 9.2Z" fill="#fff" stroke="#a0a0a0"/></svg>
<div class="title" style="left:514px;top:10px;transform:scaleX(.88)">Graphics</div>
<svg style="left:970px;top:19px" width="8" height="4" viewBox="0 0 8 4"><path d="M0 0H8L4.0 4Z" fill="#bfc9d8"/></svg>
<svg style="left:985px;top:17px" width="7" height="10" viewBox="0 0 7 10"><path d="M1 0H6V6H7V7H4V10H3V7H0V6H1Z" fill="#bfc9d8"/></svg>
<div class="abs" style="left:507px;top:58px;width:489px;height:555px;background:#fff"></div>
<svg style="left:514px;top:39px" width="14" height="14" viewBox="0 0 14 14"><circle cx="5.5" cy="5.5" r="4.3" fill="#fff" stroke="#2c4f86" stroke-width="1.5"/><path d="M8.8 8.8L13 13" stroke="#2c4f86" stroke-width="2.2"/><path d="M3.2 5.5H7.8M5.5 3.2V7.8" stroke="#2c4f86" stroke-width="1.1"/></svg>
<svg style="left:538px;top:39px" width="14" height="14" viewBox="0 0 14 14"><circle cx="5.5" cy="5.5" r="4.3" fill="#fff" stroke="#2c4f86" stroke-width="1.5"/><path d="M8.8 8.8L13 13" stroke="#2c4f86" stroke-width="2.2"/><path d="M3.2 5.5H7.8" stroke="#2c4f86" stroke-width="1.1"/></svg>
<svg style="left:560px;top:38px" width="18" height="15" viewBox="0 0 18 15"><rect x="0.7" y="6.5" width="9" height="7.5" fill="none" stroke="#2c4f86" stroke-width="1.2" stroke-dasharray="2 1.3"/><circle cx="9.3" cy="5.5" r="4.2" fill="#fff" fill-opacity=".8" stroke="#2c4f86" stroke-width="1.4"/><path d="M12.4 8.8L16.5 13.2" stroke="#2c4f86" stroke-width="2.2"/><path d="M7 5.5H11.6M9.3 3.2V7.8" stroke="#2c4f86" stroke-width="1.1"/></svg>
<svg style="left:585px;top:38px" width="15" height="15" viewBox="0 0 15 15"><rect x="0.5" y="0.5" width="14" height="14" fill="#fff" stroke="#7d7d7d"/><path d="M7.5 1.5L9.7 4.2H5.3ZM7.5 13.5L9.7 10.8H5.3ZM1.5 7.5L4.2 5.3V9.7ZM13.5 7.5L10.8 5.3V9.7Z" fill="#3f86d0"/><path d="M5.5 7.5H9.5M7.5 5.5V9.5" stroke="#444" stroke-width="1"/></svg>
<div class="abs" style="left:611px;top:38px;width:1px;height:17px;background:#d9dce3"></div>
<svg style="left:624px;top:38px" width="18" height="15" viewBox="0 0 18 15"><path d="M7.6 13.5V2" stroke="#3a78c0" stroke-width="1.2"/><path d="M7.6 0L9.4 3H5.8Z" fill="#3a78c0"/><path d="M7.6 13.5L2 7.6" stroke="#3a9a3a" stroke-width="1.2"/><path d="M0.8 6.2L4 7L1.8 9Z" fill="#3a9a3a"/><path d="M7.6 13.5L15.5 8" stroke="#d4145a" stroke-width="1.2"/><path d="M17.2 7L15.2 9.6L14 7.2Z" fill="#d4145a"/></svg>
<svg style="left:649px;top:44px" width="7.5" height="4" viewBox="0 0 7.5 4"><path d="M0 0H7.5L3.75 4Z" fill="#111"/></svg>
<svg style="left:667px;top:37px" width="18" height="18" viewBox="0 0 18 18"><rect x="0.8" y="0.8" width="16.4" height="16.4" rx="2.5" fill="#bfe0fa" stroke="#3d6fb5" stroke-width="1.6"/><rect x="2.6" y="2.6" width="12.8" height="12.8" fill="#bfe0fa" stroke="#7a8796" stroke-width="1"/><rect x="10.6" y="4" width="3.4" height="3" fill="#777"/><rect x="10.6" y="7" width="3.4" height="3.5" fill="#f08a1a"/><rect x="10.6" y="10.5" width="3.4" height="3.5" fill="#e0301a"/></svg>
<div class="abs" style="left:694px;top:38px;width:1px;height:17px;background:#d9dce3"></div>
<svg style="left:708px;top:40px" width="16" height="12" viewBox="0 0 16 12"><path d="M0 2.5H4L5.2 0.3H10.8L12 2.5H16V12H0Z" fill="#3f78b8"/><circle cx="8" cy="7" r="3.4" fill="#fff"/><circle cx="8" cy="7" r="1.9" fill="#3f78b8"/></svg>
<svg style="left:733px;top:38px" width="15" height="16" viewBox="0 0 15 16"><path d="M3 0.5H12V6H3Z" fill="#fff" stroke="#3f78b8" stroke-width="1.2"/><path d="M0 6.5Q0 5 1.5 5H13.5Q15 5 15 6.5V13H0Z" fill="#3f78b8"/><path d="M2.5 11H12.5V15.5H2.5Z" fill="#fff" stroke="#3f78b8" stroke-width="1.1"/><rect x="9.5" y="8" width="1.5" height="1.5" fill="#fff"/><rect x="12" y="8" width="1.5" height="1.5" fill="#fff"/></svg>
<svg style="left:969px;top:63px" width="23" height="21" viewBox="0 0 23 21"><path d="M0.5 4.5L18 0.5L22.5 12L10 20.5L3 17Z" fill="#eef0f4" stroke="#e2e5ea" stroke-width=".8"/><rect x="5.2" y="4.6" width="13.6" height="11" rx="1.8" fill="#1c48b6"/><path d="M6.8 6.4L13.6 6V14L6.8 14.2Z" fill="#f4e04a"/><path d="M13.6 6L17.4 6.4V13.6L13.6 14Z" fill="#3f7be0"/><path d="M9 7.5L13.6 10L9 12.8Z" fill="#ffd21f"/></svg>
<div class="t dj" style="left:572px;top:62px;letter-spacing:.12px">alpha(9)=0.62832</div>
<div class="t dj" style="left:699.5px;top:62px;">Surface: Electric field norm (V/m)</div>
<div class="t dj" style="left:529px;top:78px;">Arrow Line: Incident wave vector  Arrow Line: Port mode wave vector</div>
<div class="t dj" style="left:521px;top:94px;letter-spacing:.04px">Arrow Line: Port mode wave vector  Arrow Line: Port mode wave vector</div>
<div class="t dj" style="left:521px;top:110px;letter-spacing:.04px">Arrow Line: Port mode wave vector  Arrow Line: Port mode wave vector</div>
<div class="t dj" style="left:632px;top:126px;">Arrow Line: Port mode wave vector</div>
<svg style="left:0;top:0" width="1003" height="687" viewBox="0 0 1003 687"><defs><filter id="jet" x="0" y="0" width="1" height="1" color-interpolation-filters="sRGB"><feComponentTransfer><feFuncR type="table" tableValues="0 0 0 0 .5 1 1 1 .5"/><feFuncG type="table" tableValues="0 0 .5 1 1 1 .5 0 0"/><feFuncB type="table" tableValues=".5 1 1 1 .5 0 0 0 0"/></feComponentTransfer></filter><linearGradient id="gs" gradientUnits="userSpaceOnUse" x1="726" y1="214" x2="741.17" y2="249.28" spreadMethod="repeat"><stop offset="0.0000" stop-color="#fcfcfc"/><stop offset="0.0625" stop-color="#f8f8f8"/><stop offset="0.1250" stop-color="#ededed"/><stop offset="0.1875" stop-color="#dcdcdc"/><stop offset="0.2500" stop-color="#c6c6c6"/><stop offset="0.3125" stop-color="#adadad"/><stop offset="0.3750" stop-color="#959595"/><stop offset="0.4375" stop-color="#828282"/><stop offset="0.5000" stop-color="#7b7b7b"/><stop offset="0.5625" stop-color="#828282"/><stop offset="0.6250" stop-color="#959595"/><stop offset="0.6875" stop-color="#adadad"/><stop offset="0.7500" stop-color="#c6c6c6"/><stop offset="0.8125" stop-color="#dcdcdc"/><stop offset="0.8750" stop-color="#ededed"/><stop offset="0.9375" stop-color="#f8f8f8"/><stop offset="1.0000" stop-color="#fcfcfc"/></linearGradient><linearGradient id="ged" x1="0" y1="0" x2="1" y2="0"><stop offset="0" stop-color="#a6a6a6" stop-opacity="0.4"/><stop offset="0.12" stop-color="#a6a6a6" stop-opacity="0.3"/><stop offset="0.25" stop-color="#a6a6a6" stop-opacity="0.16"/><stop offset="0.38" stop-color="#a6a6a6" stop-opacity="0.05"/><stop offset="0.5" stop-color="#a6a6a6" stop-opacity="0"/><stop offset="0.62" stop-color="#a6a6a6" stop-opacity="0.05"/><stop offset="0.75" stop-color="#a6a6a6" stop-opacity="0.16"/><stop offset="0.88" stop-color="#a6a6a6" stop-opacity="0.3"/><stop offset="1" stop-color="#a6a6a6" stop-opacity="0.4"/></linearGradient><linearGradient id="gb" x1="0" y1="0" x2="1" y2="0"><stop offset="0.0" stop-color="#777777" stop-opacity="1"/><stop offset="0.04" stop-color="#6e6e6e" stop-opacity="1"/><stop offset="0.103" stop-color="#666666" stop-opacity="1"/><stop offset="0.199" stop-color="#606060" stop-opacity="1"/><stop offset="0.278" stop-color="#565656" stop-opacity="1"/><stop offset="0.358" stop-color="#4b4b4b" stop-opacity="1"/><stop offset="0.453" stop-color="#454545" stop-opacity="1"/><stop offset="0.58" stop-color="#424242" stop-opacity="1"/><stop offset="0.692" stop-color="#444444" stop-opacity="1"/><stop offset="0.771" stop-color="#4b4b4b" stop-opacity="1"/><stop offset="0.835" stop-color="#585858" stop-opacity="1"/><stop offset="0.898" stop-color="#626262" stop-opacity="1"/><stop offset="1.0" stop-color="#6a6a6a" stop-opacity="1"/></linearGradient><linearGradient id="gfade" x1="0" y1="0" x2="0" y2="1"><stop offset="0" stop-color="#666666" stop-opacity="1"/><stop offset="0.08" stop-color="#656565" stop-opacity="0.75"/><stop offset="0.2" stop-color="#626262" stop-opacity="0.45"/><stop offset="0.5" stop-color="#5c5c5c" stop-opacity="0.25"/><stop offset="1" stop-color="#585858" stop-opacity="0"/></linearGradient><radialGradient id="gsh" ><stop offset="0" stop-color="#161616" stop-opacity="1"/><stop offset="0.45" stop-color="#313131" stop-opacity="0.8"/><stop offset="1" stop-color="#515151" stop-opacity="0"/></radialGradient><radialGradient id="gsh2" ><stop offset="0" stop-color="#414141" stop-opacity="0.8"/><stop offset="0.6" stop-color="#454545" stop-opacity="0.4"/><stop offset="1" stop-color="#4d4d4d" stop-opacity="0"/></radialGradient><radialGradient id="gy" ><stop offset="0" stop-color="#a6a6a6" stop-opacity="1"/><stop offset="0.6" stop-color="#aeaeae" stop-opacity="0.7"/><stop offset="1" stop-color="#b6b6b6" stop-opacity="0"/></radialGradient><radialGradient id="gr" ><stop offset="0" stop-color="#f4f4f4" stop-opacity="1"/><stop offset="0.55" stop-color="#e5e5e5" stop-opacity="0.8"/><stop offset="1" stop-color="#cdcdcd" stop-opacity="0"/></radialGradient><radialGradient id="gh" ><stop offset="0.55" stop-color="#ececec" stop-opacity="1"/><stop offset="0.68" stop-color="#cdcdcd" stop-opacity="1"/><stop offset="0.8" stop-color="#9e9e9e" stop-opacity="0.8"/><stop offset="0.9" stop-color="#7f7f7f" stop-opacity="0.5"/><stop offset="1" stop-color="#686868" stop-opacity="0"/></radialGradient><radialGradient id="gh2" ><stop offset="0.7" stop-color="#dddddd" stop-opacity="1"/><stop offset="0.85" stop-color="#a6a6a6" stop-opacity="0.8"/><stop offset="1" stop-color="#707070" stop-opacity="0"/></radialGradient><radialGradient id="gc" cx=".28" cy=".25" r=".8"><stop offset="0" stop-color="#3f3f3f" stop-opacity="1"/><stop offset="0.35" stop-color="#2d2d2d" stop-opacity="1"/><stop offset="0.7" stop-color="#181818" stop-opacity="1"/><stop offset="1" stop-color="#070707" stop-opacity="1"/></radialGradient><linearGradient id="gcb" x1="0" y1="0" x2="0" y2="1"><stop offset="0.0000" stop-color="#800000"/><stop offset="0.0312" stop-color="#9f0000"/><stop offset="0.0625" stop-color="#bf0000"/><stop offset="0.0938" stop-color="#df0000"/><stop offset="0.1250" stop-color="#ff0000"/><stop offset="0.1562" stop-color="#ff2000"/><stop offset="0.1875" stop-color="#ff4000"/><stop offset="0.2188" stop-color="#ff6000"/><stop offset="0.2500" stop-color="#ff8000"/><stop offset="0.2812" stop-color="#ff9f00"/><stop offset="0.3125" stop-color="#ffbf00"/><stop offset="0.3438" stop-color="#ffdf00"/><stop offset="0.3750" stop-color="#ffff00"/><stop offset="0.4062" stop-color="#dfff20"/><stop offset="0.4375" stop-color="#bfff40"/><stop offset="0.4688" stop-color="#9fff60"/><stop offset="0.5000" stop-color="#80ff80"/><stop offset="0.5312" stop-color="#60ff9f"/><stop offset="0.5625" stop-color="#40ffbf"/><stop offset="0.5938" stop-color="#20ffdf"/><stop offset="0.6250" stop-color="#00ffff"/><stop offset="0.6562" stop-color="#00dfff"/><stop offset="0.6875" stop-color="#00bfff"/><stop offset="0.7188" stop-color="#009fff"/><stop offset="0.7500" stop-color="#0080ff"/><stop offset="0.7812" stop-color="#0060ff"/><stop offset="0.8125" stop-color="#0040ff"/><stop offset="0.8438" stop-color="#0020ff"/><stop offset="0.8750" stop-color="#0000ff"/><stop offset="0.9062" stop-color="#0000df"/><stop offset="0.9375" stop-color="#0000bf"/><stop offset="0.9688" stop-color="#00009f"/><stop offset="1.0000" stop-color="#000080"/></linearGradient><clipPath id="cdom"><rect x="694.5" y="178.4" width="62.89999999999998" height="377.9"/></clipPath><clipPath id="ctop"><rect x="694.5" y="178.4" width="62.89999999999998" height="188.9"/></clipPath><clipPath id="cbot"><rect x="694.5" y="367.3" width="62.89999999999998" height="188.99999999999994"/></clipPath></defs><g clip-path="url(#cdom)"><g filter="url(#jet)"><rect x="692.5" y="176.4" width="66.89999999999998" height="381.9" fill="#888"/><g clip-path="url(#ctop)"><rect x="694.5" y="178.4" width="62.89999999999998" height="188.9" fill="url(#gs)"/><rect x="694.5" y="178.4" width="62.89999999999998" height="188.9" fill="url(#ged)"/><ellipse cx="716" cy="346" rx="28" ry="12" transform="rotate(-27 716 346)" fill="url(#gr)"/><ellipse cx="748" cy="355" rx="12" ry="15" fill="url(#gy)"/><ellipse cx="704" cy="364" rx="12" ry="7" fill="url(#gr)" opacity=".7"/></g><g clip-path="url(#cbot)"><rect x="694.5" y="367.3" width="62.89999999999998" height="188.99999999999994" fill="url(#gb)"/><rect x="694.5" y="367.3" width="62.89999999999998" height="150" fill="url(#gfade)"/><ellipse cx="731" cy="396" rx="15" ry="20" fill="url(#gsh2)"/><ellipse cx="732.5" cy="380.5" rx="7" ry="10" transform="rotate(-30 732.5 380.5)" fill="url(#gsh)"/><rect x="694.5" y="367.3" width="20" height="2" fill="#9e9e9e" opacity=".9"/><rect x="694.5" y="369.3" width="20" height="2.5" fill="#838383" opacity=".6"/><circle cx="723" cy="368" r="17.5" fill="url(#gh)"/><circle cx="729" cy="368" r="12.5" fill="url(#gh2)"/></g><circle cx="726" cy="367.3" r="12.4" fill="url(#gc)"/></g></g><circle cx="726" cy="367.3" r="12.4" fill="none" stroke="#000" stroke-width="1.1"/><path d="M694.5 178.4V556.3M757.4 178.4V556.3" stroke="#000" stroke-width="1.1" fill="none"/><path d="M694.5 367.3H713.5M738.5 367.3H757.4" stroke="#000" stroke-width="1" fill="none"/><g fill="none"><path d="M696.8 178.4L707.9 193.7" stroke="#ff00ff" stroke-width="1.6"/><path d="M711.1 198.2L706.0 195.1L709.7 192.4Z" fill="#ff00ff"/><path d="M702.1 178.4L713.2 193.7" stroke="#ff00ff" stroke-width="1.6"/><path d="M716.4 198.2L711.3 195.1L715.0 192.4Z" fill="#ff00ff"/><path d="M707.4 178.4L718.5 193.7" stroke="#ff00ff" stroke-width="1.6"/><path d="M721.7 198.2L716.6 195.1L720.3 192.4Z" fill="#ff00ff"/><path d="M712.7 178.4L723.8 193.7" stroke="#ff00ff" stroke-width="1.6"/><path d="M727.0 198.2L721.9 195.1L725.6 192.4Z" fill="#ff00ff"/><path d="M718.0 178.4L729.1 193.7" stroke="#ff00ff" stroke-width="1.6"/><path d="M732.3 198.2L727.2 195.1L730.9 192.4Z" fill="#ff00ff"/><path d="M723.3 178.4L734.4 193.7" stroke="#ff00ff" stroke-width="1.6"/><path d="M737.6 198.2L732.5 195.1L736.2 192.4Z" fill="#ff00ff"/><path d="M728.6 178.4L739.7 193.7" stroke="#ff00ff" stroke-width="1.6"/><path d="M742.9 198.2L737.8 195.1L741.5 192.4Z" fill="#ff00ff"/><path d="M733.9 178.4L745.0 193.7" stroke="#ff00ff" stroke-width="1.6"/><path d="M748.2 198.2L743.1 195.1L746.8 192.4Z" fill="#ff00ff"/><path d="M739.2 178.4L750.3 193.7" stroke="#ff00ff" stroke-width="1.6"/><path d="M753.5 198.2L748.4 195.1L752.1 192.4Z" fill="#ff00ff"/><path d="M744.5 178.4L755.6 193.7" stroke="#ff00ff" stroke-width="1.6"/><path d="M758.8 198.2L753.7 195.1L757.4 192.4Z" fill="#ff00ff"/><path d="M749.8 178.4L760.9 193.7" stroke="#ff00ff" stroke-width="1.6"/><path d="M764.1 198.2L759.0 195.1L762.7 192.4Z" fill="#ff00ff"/><path d="M755.1 178.4L766.2 193.7" stroke="#ff00ff" stroke-width="1.6"/><path d="M769.4 198.2L764.3 195.1L768.0 192.4Z" fill="#ff00ff"/><path d="M696.8 178.4L707.9 163.1" stroke="#0000ff" stroke-width="1.6"/><path d="M711.1 158.6L709.7 164.4L706.0 161.7Z" fill="#0000ff"/><path d="M702.1 178.4L713.2 163.1" stroke="#0000ff" stroke-width="1.6"/><path d="M716.4 158.6L715.0 164.4L711.3 161.7Z" fill="#0000ff"/><path d="M707.4 178.4L718.5 163.1" stroke="#0000ff" stroke-width="1.6"/><path d="M721.7 158.6L720.3 164.4L716.6 161.7Z" fill="#0000ff"/><path d="M712.7 178.4L723.8 163.1" stroke="#0000ff" stroke-width="1.6"/><path d="M727.0 158.6L725.6 164.4L721.9 161.7Z" fill="#0000ff"/><path d="M718.0 178.4L729.1 163.1" stroke="#0000ff" stroke-width="1.6"/><path d="M732.3 158.6L730.9 164.4L727.2 161.7Z" fill="#0000ff"/><path d="M723.3 178.4L734.4 163.1" stroke="#0000ff" stroke-width="1.6"/><path d="M737.6 158.6L736.2 164.4L732.5 161.7Z" fill="#0000ff"/><path d="M728.6 178.4L739.7 163.1" stroke="#0000ff" stroke-width="1.6"/><path d="M742.9 158.6L741.5 164.4L737.8 161.7Z" fill="#0000ff"/><path d="M733.9 178.4L745.0 163.1" stroke="#0000ff" stroke-width="1.6"/><path d="M748.2 158.6L746.8 164.4L743.1 161.7Z" fill="#0000ff"/><path d="M739.2 178.4L750.3 163.1" stroke="#0000ff" stroke-width="1.6"/><path d="M753.5 158.6L752.1 164.4L748.4 161.7Z" fill="#0000ff"/><path d="M744.5 178.4L755.6 163.1" stroke="#0000ff" stroke-width="1.6"/><path d="M758.8 158.6L757.4 164.4L753.7 161.7Z" fill="#0000ff"/><path d="M749.8 178.4L760.9 163.1" stroke="#0000ff" stroke-width="1.6"/><path d="M764.1 158.6L762.7 164.4L759.0 161.7Z" fill="#0000ff"/><path d="M755.1 178.4L766.2 163.1" stroke="#0000ff" stroke-width="1.6"/><path d="M769.4 158.6L768.0 164.4L764.3 161.7Z" fill="#0000ff"/><path d="M696.8 178.4L691.5 169.2" stroke="#00f000" stroke-width="1.3"/><path d="M689.2 165.2L693.2 168.2L689.8 170.2Z" fill="#00f000"/><path d="M702.1 178.4L696.8 169.2" stroke="#00f000" stroke-width="1.3"/><path d="M694.5 165.2L698.5 168.2L695.1 170.2Z" fill="#00f000"/><path d="M707.4 178.4L702.1 169.2" stroke="#00f000" stroke-width="1.3"/><path d="M699.8 165.2L703.8 168.2L700.4 170.2Z" fill="#00f000"/><path d="M712.7 178.4L707.4 169.2" stroke="#00f000" stroke-width="1.3"/><path d="M705.1 165.2L709.1 168.2L705.7 170.2Z" fill="#00f000"/><path d="M718.0 178.4L712.7 169.2" stroke="#00f000" stroke-width="1.3"/><path d="M710.4 165.2L714.4 168.2L711.0 170.2Z" fill="#00f000"/><path d="M723.3 178.4L718.0 169.2" stroke="#00f000" stroke-width="1.3"/><path d="M715.7 165.2L719.7 168.2L716.3 170.2Z" fill="#00f000"/><path d="M728.6 178.4L723.3 169.2" stroke="#00f000" stroke-width="1.3"/><path d="M721.0 165.2L725.0 168.2L721.6 170.2Z" fill="#00f000"/><path d="M733.9 178.4L728.6 169.2" stroke="#00f000" stroke-width="1.3"/><path d="M726.3 165.2L730.3 168.2L726.9 170.2Z" fill="#00f000"/><path d="M739.2 178.4L733.9 169.2" stroke="#00f000" stroke-width="1.3"/><path d="M731.6 165.2L735.6 168.2L732.2 170.2Z" fill="#00f000"/><path d="M744.5 178.4L739.2 169.2" stroke="#00f000" stroke-width="1.3"/><path d="M736.9 165.2L740.9 168.2L737.5 170.2Z" fill="#00f000"/><path d="M749.8 178.4L744.5 169.2" stroke="#00f000" stroke-width="1.3"/><path d="M742.2 165.2L746.2 168.2L742.8 170.2Z" fill="#00f000"/><path d="M755.1 178.4L749.8 169.2" stroke="#00f000" stroke-width="1.3"/><path d="M747.5 165.2L751.5 168.2L748.1 170.2Z" fill="#00f000"/><path d="M696.8 178.7L708.8 178.7" stroke="#00ffff" stroke-width="1.8"/><path d="M712.8 178.7L708.8 180.6L708.8 176.8Z" fill="#00ffff"/><path d="M702.1 178.7L714.1 178.7" stroke="#00ffff" stroke-width="1.8"/><path d="M718.1 178.7L714.1 180.6L714.1 176.8Z" fill="#00ffff"/><path d="M707.4 178.7L719.4 178.7" stroke="#00ffff" stroke-width="1.8"/><path d="M723.4 178.7L719.4 180.6L719.4 176.8Z" fill="#00ffff"/><path d="M712.7 178.7L724.7 178.7" stroke="#00ffff" stroke-width="1.8"/><path d="M728.7 178.7L724.7 180.6L724.7 176.8Z" fill="#00ffff"/><path d="M718.0 178.7L730.0 178.7" stroke="#00ffff" stroke-width="1.8"/><path d="M734.0 178.7L730.0 180.6L730.0 176.8Z" fill="#00ffff"/><path d="M723.3 178.7L735.3 178.7" stroke="#00ffff" stroke-width="1.8"/><path d="M739.3 178.7L735.3 180.6L735.3 176.8Z" fill="#00ffff"/><path d="M728.6 178.7L740.6 178.7" stroke="#00ffff" stroke-width="1.8"/><path d="M744.6 178.7L740.6 180.6L740.6 176.8Z" fill="#00ffff"/><path d="M733.9 178.7L745.9 178.7" stroke="#00ffff" stroke-width="1.8"/><path d="M749.9 178.7L745.9 180.6L745.9 176.8Z" fill="#00ffff"/><path d="M739.2 178.7L751.2 178.7" stroke="#00ffff" stroke-width="1.8"/><path d="M755.2 178.7L751.2 180.6L751.2 176.8Z" fill="#00ffff"/><path d="M744.5 178.7L756.5 178.7" stroke="#00ffff" stroke-width="1.8"/><path d="M760.5 178.7L756.5 180.6L756.5 176.8Z" fill="#00ffff"/><path d="M749.8 178.7L761.8 178.7" stroke="#00ffff" stroke-width="1.8"/><path d="M765.8 178.7L761.8 180.6L761.8 176.8Z" fill="#00ffff"/><path d="M755.1 178.7L767.1 178.7" stroke="#00ffff" stroke-width="1.8"/><path d="M771.1 178.7L767.1 180.6L767.1 176.8Z" fill="#00ffff"/><path d="M696.8 556.3L705.7 572.5" stroke="#0000ff" stroke-width="1.6"/><path d="M708.4 577.3L703.7 573.6L707.8 571.4Z" fill="#0000ff"/><path d="M702.1 556.3L711.0 572.5" stroke="#0000ff" stroke-width="1.6"/><path d="M713.7 577.3L709.0 573.6L713.1 571.4Z" fill="#0000ff"/><path d="M707.4 556.3L716.3 572.5" stroke="#0000ff" stroke-width="1.6"/><path d="M719.0 577.3L714.3 573.6L718.4 571.4Z" fill="#0000ff"/><path d="M712.7 556.3L721.6 572.5" stroke="#0000ff" stroke-width="1.6"/><path d="M724.3 577.3L719.6 573.6L723.7 571.4Z" fill="#0000ff"/><path d="M718.0 556.3L726.9 572.5" stroke="#0000ff" stroke-width="1.6"/><path d="M729.6 577.3L724.9 573.6L729.0 571.4Z" fill="#0000ff"/><path d="M723.3 556.3L732.2 572.5" stroke="#0000ff" stroke-width="1.6"/><path d="M734.9 577.3L730.2 573.6L734.3 571.4Z" fill="#0000ff"/><path d="M728.6 556.3L737.5 572.5" stroke="#0000ff" stroke-width="1.6"/><path d="M740.2 577.3L735.5 573.6L739.6 571.4Z" fill="#0000ff"/><path d="M733.9 556.3L742.8 572.5" stroke="#0000ff" stroke-width="1.6"/><path d="M745.5 577.3L740.8 573.6L744.9 571.4Z" fill="#0000ff"/><path d="M739.2 556.3L748.1 572.5" stroke="#0000ff" stroke-width="1.6"/><path d="M750.8 577.3L746.1 573.6L750.2 571.4Z" fill="#0000ff"/><path d="M744.5 556.3L753.4 572.5" stroke="#0000ff" stroke-width="1.6"/><path d="M756.1 577.3L751.4 573.6L755.5 571.4Z" fill="#0000ff"/><path d="M749.8 556.3L758.7 572.5" stroke="#0000ff" stroke-width="1.6"/><path d="M761.4 577.3L756.7 573.6L760.8 571.4Z" fill="#0000ff"/><path d="M755.1 556.3L764.0 572.5" stroke="#0000ff" stroke-width="1.6"/><path d="M766.7 577.3L762.0 573.6L766.1 571.4Z" fill="#0000ff"/><path d="M696.8 556.3L691.2 568.1" stroke="#00f000" stroke-width="1.3"/><path d="M689.2 572.3L689.4 567.3L693.0 569.0Z" fill="#00f000"/><path d="M702.1 556.3L696.5 568.1" stroke="#00f000" stroke-width="1.3"/><path d="M694.5 572.3L694.7 567.3L698.3 569.0Z" fill="#00f000"/><path d="M707.4 556.3L701.8 568.1" stroke="#00f000" stroke-width="1.3"/><path d="M699.8 572.3L700.0 567.3L703.6 569.0Z" fill="#00f000"/><path d="M712.7 556.3L707.1 568.1" stroke="#00f000" stroke-width="1.3"/><path d="M705.1 572.3L705.3 567.3L708.9 569.0Z" fill="#00f000"/><path d="M718.0 556.3L712.4 568.1" stroke="#00f000" stroke-width="1.3"/><path d="M710.4 572.3L710.6 567.3L714.2 569.0Z" fill="#00f000"/><path d="M723.3 556.3L717.7 568.1" stroke="#00f000" stroke-width="1.3"/><path d="M715.7 572.3L715.9 567.3L719.5 569.0Z" fill="#00f000"/><path d="M728.6 556.3L723.0 568.1" stroke="#00f000" stroke-width="1.3"/><path d="M721.0 572.3L721.2 567.3L724.8 569.0Z" fill="#00f000"/><path d="M733.9 556.3L728.3 568.1" stroke="#00f000" stroke-width="1.3"/><path d="M726.3 572.3L726.5 567.3L730.1 569.0Z" fill="#00f000"/><path d="M739.2 556.3L733.6 568.1" stroke="#00f000" stroke-width="1.3"/><path d="M731.6 572.3L731.8 567.3L735.4 569.0Z" fill="#00f000"/><path d="M744.5 556.3L738.9 568.1" stroke="#00f000" stroke-width="1.3"/><path d="M736.9 572.3L737.1 567.3L740.7 569.0Z" fill="#00f000"/><path d="M749.8 556.3L744.2 568.1" stroke="#00f000" stroke-width="1.3"/><path d="M742.2 572.3L742.4 567.3L746.0 569.0Z" fill="#00f000"/><path d="M755.1 556.3L749.5 568.1" stroke="#00f000" stroke-width="1.3"/><path d="M747.5 572.3L747.7 567.3L751.3 569.0Z" fill="#00f000"/><path d="M696.8 556.5L708.8 556.5" stroke="#00ffff" stroke-width="1.8"/><path d="M712.8 556.5L708.8 558.4L708.8 554.6Z" fill="#00ffff"/><path d="M702.1 556.5L714.1 556.5" stroke="#00ffff" stroke-width="1.8"/><path d="M718.1 556.5L714.1 558.4L714.1 554.6Z" fill="#00ffff"/><path d="M707.4 556.5L719.4 556.5" stroke="#00ffff" stroke-width="1.8"/><path d="M723.4 556.5L719.4 558.4L719.4 554.6Z" fill="#00ffff"/><path d="M712.7 556.5L724.7 556.5" stroke="#00ffff" stroke-width="1.8"/><path d="M728.7 556.5L724.7 558.4L724.7 554.6Z" fill="#00ffff"/><path d="M718.0 556.5L730.0 556.5" stroke="#00ffff" stroke-width="1.8"/><path d="M734.0 556.5L730.0 558.4L730.0 554.6Z" fill="#00ffff"/><path d="M723.3 556.5L735.3 556.5" stroke="#00ffff" stroke-width="1.8"/><path d="M739.3 556.5L735.3 558.4L735.3 554.6Z" fill="#00ffff"/><path d="M728.6 556.5L740.6 556.5" stroke="#00ffff" stroke-width="1.8"/><path d="M744.6 556.5L740.6 558.4L740.6 554.6Z" fill="#00ffff"/><path d="M733.9 556.5L745.9 556.5" stroke="#00ffff" stroke-width="1.8"/><path d="M749.9 556.5L745.9 558.4L745.9 554.6Z" fill="#00ffff"/><path d="M739.2 556.5L751.2 556.5" stroke="#00ffff" stroke-width="1.8"/><path d="M755.2 556.5L751.2 558.4L751.2 554.6Z" fill="#00ffff"/><path d="M744.5 556.5L756.5 556.5" stroke="#00ffff" stroke-width="1.8"/><path d="M760.5 556.5L756.5 558.4L756.5 554.6Z" fill="#00ffff"/><path d="M749.8 556.5L761.8 556.5" stroke="#00ffff" stroke-width="1.8"/><path d="M765.8 556.5L761.8 558.4L761.8 554.6Z" fill="#00ffff"/><path d="M755.1 556.5L767.1 556.5" stroke="#00ffff" stroke-width="1.8"/><path d="M771.1 556.5L767.1 558.4L767.1 554.6Z" fill="#00ffff"/></g><rect x="554.5" y="144.5" width="362.0" height="445.0" fill="none" stroke="#000" stroke-width="1"/><path d="M554.5 586.5h5M916.5 586.5h-5M554.5 555.5h5M916.5 555.5h-5M554.5 524.5h5M916.5 524.5h-5M554.5 492.5h5M916.5 492.5h-5M554.5 461.5h5M916.5 461.5h-5M554.5 429.5h5M916.5 429.5h-5M554.5 398.5h5M916.5 398.5h-5M554.5 367.5h5M916.5 367.5h-5M554.5 335.5h5M916.5 335.5h-5M554.5 304.5h5M916.5 304.5h-5M554.5 273.5h5M916.5 273.5h-5M554.5 241.5h5M916.5 241.5h-5M554.5 210.5h5M916.5 210.5h-5M554.5 178.5h5M916.5 178.5h-5M554.5 147.5h5M916.5 147.5h-5M616.5 144.5v5M616.5 589.5v-5M694.5 144.5v5M694.5 589.5v-5M773.5 144.5v5M773.5 589.5v-5M851.5 144.5v5M851.5 589.5v-5" stroke="#000" stroke-width="1" fill="none"/><rect x="937" y="167" width="16" height="410" fill="url(#gcb)"/><path d="M953 534.5h-3M937 534.5h2M953 472.5h-3M937 472.5h2M953 409.5h-3M937 409.5h2M953 347.5h-3M937 347.5h2M953 284.5h-3M937 284.5h2M953 222.5h-3M937 222.5h2" stroke="#000" stroke-width="1" fill="none"/><g font-family="DejaVu Sans,sans-serif" fill="#111"><text x="549.3" y="590.8" text-anchor="end" font-size="12.2">-1.4</text><text x="549.3" y="559.8" text-anchor="end" font-size="12.2">-1.2</text><text x="549.3" y="528.8" text-anchor="end" font-size="12.2">-1</text><text x="549.3" y="496.8" text-anchor="end" font-size="12.2">-0.8</text><text x="549.3" y="465.8" text-anchor="end" font-size="12.2">-0.6</text><text x="549.3" y="433.8" text-anchor="end" font-size="12.2">-0.4</text><text x="549.3" y="402.8" text-anchor="end" font-size="12.2">-0.2</text><text x="549.3" y="371.8" text-anchor="end" font-size="12.2">0</text><text x="549.3" y="339.8" text-anchor="end" font-size="12.2">0.2</text><text x="549.3" y="308.8" text-anchor="end" font-size="12.2">0.4</text><text x="549.3" y="277.8" text-anchor="end" font-size="12.2">0.6</text><text x="549.3" y="245.8" text-anchor="end" font-size="12.2">0.8</text><text x="549.3" y="214.8" text-anchor="end" font-size="12.2">1</text><text x="549.3" y="182.8" text-anchor="end" font-size="12.2">1.2</text><text x="616.8000000000001" y="607.8" text-anchor="middle" font-size="12.2">-0.5</text><text x="695.2" y="607.8" text-anchor="middle" font-size="12.2">0</text><text x="773.6" y="607.8" text-anchor="middle" font-size="12.2">0.5</text><text x="852.0000000000001" y="607.8" text-anchor="middle" font-size="12.2">1</text><text x="959.9" y="538.9" text-anchor="start" font-size="12.2">1</text><text x="959.9" y="476.48" text-anchor="start" font-size="12.2">2</text><text x="959.9" y="414.06" text-anchor="start" font-size="12.2">3</text><text x="959.9" y="351.64000000000004" text-anchor="start" font-size="12.2">4</text><text x="959.9" y="289.22" text-anchor="start" font-size="12.2">5</text><text x="959.9" y="226.8" text-anchor="start" font-size="12.2">6</text><text x="509.5" y="156.7" text-anchor="start" font-size="12.2">×10</text><text x="535" y="151.3" text-anchor="start" font-size="8.8">-6</text><text x="881" y="607.8" text-anchor="start" font-size="12.2">×10</text><text x="906.5" y="602.4" text-anchor="start" font-size="8.8">-6</text><text x="952" y="158.8" text-anchor="start" font-size="12.2">×10</text><text x="977.5" y="153.4" text-anchor="start" font-size="8.8">4</text></g></svg>
<div class="abs" style="left:507px;top:648px;width:489px;height:1px;background:#d2d4d8"></div>
<div class="abs" style="left:511px;top:625px;width:69px;height:24px;background:#f9fbfe;border:1px solid #d2d4d8;border-bottom:none"></div>
<div class="abs" style="left:588px;top:625px;width:60px;height:23px;background:#ebecee"></div>
<div class="abs" style="left:656px;top:625px;width:30px;height:23px;background:#ebecee"></div>
<div class="t" style="left:516px;top:630px;font-size:13px;color:#3b67a6">Messages</div>
<div class="t" style="left:592px;top:630px;font-size:13px">Progress</div>
<div class="t" style="left:660px;top:630px;font-size:13px">Log</div>
<svg style="left:955px;top:635px" width="8" height="4" viewBox="0 0 8 4"><path d="M0 0H8L4.0 4Z" fill="#bfc9d8"/></svg>
<svg style="left:970px;top:632px" width="7" height="10" viewBox="0 0 7 10"><path d="M1 0H6V6H7V7H4V10H3V7H0V6H1Z" fill="#bfc9d8"/></svg>
<svg style="left:983.5px;top:631px" width="10" height="10" viewBox="0 0 10 10"><path d="M0.5 0.5L9.5 9.5M9.5 0.5L0.5 9.5" stroke="#bfc9d8" stroke-width="1.2"/></svg>
<svg style="left:516px;top:656px" width="11" height="16" viewBox="0 0 11 16"><path d="M1 0.5L5.5 8.5" stroke="#555" stroke-width="1.5"/><path d="M3.5 8.5L7 7L10.5 13L6 15.5Z" fill="#f3c58a" stroke="#c88a3a" stroke-width=".8"/></svg>
<div class="abs" style="left:512px;top:677px;width:481px;height:20px;border:1px solid #d2d4d8;background:#fff"></div>
<div class="t" style="left:516px;top:679px;letter-spacing:-.55px">COMSOL 5.1.0.103</div>
</div></body></html>
